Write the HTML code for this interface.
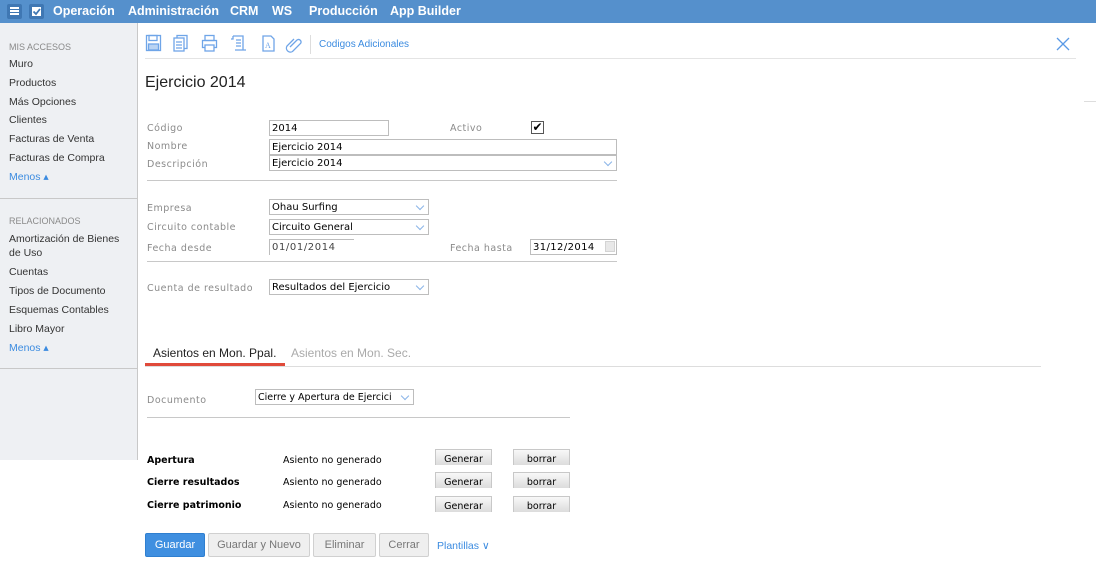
<!DOCTYPE html>
<html><head><meta charset="utf-8"><style>
*{margin:0;padding:0;box-sizing:border-box}
body{width:1096px;height:565px;position:relative;background:#fff;font-family:"Liberation Sans",sans-serif;overflow:hidden}
.a{position:absolute;white-space:nowrap}
#top{left:0;top:0;width:1096px;height:23px;background:#5590cc}
.mn{color:#fff;font-weight:bold;font-size:12.5px;top:4px}
#side{left:0;top:23px;width:138px;height:437px;background:#eef0f3;border-right:1px solid #c8c8c8}
.si{font-size:10.5px;color:#333;left:9px}
.sh{font-size:9px;color:#8a8a8a;left:9px}
.mo{font-size:10.5px;color:#3b8be0;left:9px}
.lb{font-family:"DejaVu Sans",sans-serif;font-size:9.5px;color:#8a8a8a;letter-spacing:.5px;left:147px}
.in{border:1px solid #bdbdbd;height:16px;font-family:"DejaVu Sans",sans-serif;font-size:10px;color:#000;padding:0 2px;line-height:15px;background:#fff}
.sel::after{content:"";position:absolute;right:5px;top:3px;width:5px;height:5px;border-right:1px solid #8ab4e8;border-bottom:1px solid #8ab4e8;transform:rotate(45deg)}
.hr{height:1px;background:#c8c8c8}
.b{font-family:"DejaVu Sans",sans-serif;font-size:9.5px;font-weight:bold;left:147px}
.t{font-family:"DejaVu Sans",sans-serif;font-size:9.5px;left:283px}
.gb{height:16px;width:57px;background:linear-gradient(#f8f8f8,#dcdcdc);border:1px solid #c8c8c8;border-bottom:none;font-family:"DejaVu Sans",sans-serif;font-size:9.5px;text-align:center;line-height:20px;overflow:hidden}
.bt{top:533px;height:24px;border:1px solid #d0d0d0;background:#efefef;color:#777;font-size:11px;text-align:center;line-height:22px;border-radius:2px}
</style></head><body>
<div class="a" id="top"></div>
<div class="a" style="left:7px;top:4px;width:15px;height:15px;background:#3f77b3;border-radius:2px"></div>
<div class="a" style="left:10px;top:7px;width:9px;height:2px;background:#fff;box-shadow:0 3px #fff,0 6px #fff"></div>
<div class="a" style="left:29px;top:4px;width:15px;height:15px;background:#3f77b3;border-radius:2px"></div>
<div class="a" style="left:32px;top:7px;width:9px;height:9px;background:#fff"></div>
<svg class="a" style="left:32px;top:7px" width="9" height="9"><path d="M1.5 4.5 L4 7 L8 2" stroke="#3f77b3" stroke-width="1.8" fill="none"/></svg>
<div class="a mn" style="left:53px">Operación</div>
<div class="a mn" style="left:128px">Administración</div>
<div class="a mn" style="left:230px">CRM</div>
<div class="a mn" style="left:272px">WS</div>
<div class="a mn" style="left:309px">Producción</div>
<div class="a mn" style="left:390px">App Builder</div>

<div class="a" id="side"></div>
<div class="a sh" style="top:42px">MIS ACCESOS</div>
<div class="a si" style="top:58px">Muro</div>
<div class="a si" style="top:77px">Productos</div>
<div class="a si" style="top:96px">Más Opciones</div>
<div class="a si" style="top:114px">Clientes</div>
<div class="a si" style="top:133px">Facturas de Venta</div>
<div class="a si" style="top:152px">Facturas de Compra</div>
<div class="a mo" style="top:171px">Menos ▴</div>
<div class="a hr" style="left:0;top:198px;width:137px"></div>
<div class="a sh" style="top:216px">RELACIONADOS</div>
<div class="a si" style="top:233px">Amortización de Bienes</div>
<div class="a si" style="top:247px">de Uso</div>
<div class="a si" style="top:266px">Cuentas</div>
<div class="a si" style="top:285px">Tipos de Documento</div>
<div class="a si" style="top:304px">Esquemas Contables</div>
<div class="a si" style="top:323px">Libro Mayor</div>
<div class="a mo" style="top:342px">Menos ▴</div>
<div class="a hr" style="left:0;top:368px;width:137px"></div>

<svg class="a" style="left:145px;top:34px" width="165" height="20" fill="none" stroke="#6fa5e8" stroke-width="1.3">
<rect x="1.5" y="1.5" width="14" height="15"/><rect x="4" y="1.5" width="8" height="5"/><rect x="3.5" y="10" width="10" height="6" fill="#b9d3f3"/>
<rect x="32" y="1.5" width="10" height="13"/><rect x="29" y="4" width="10" height="13" fill="#fff"/><path d="M31 8h6M31 11h6M31 14h6"/>
<rect x="60" y="1.5" width="9" height="5"/><rect x="57.5" y="6.5" width="14" height="7"/><rect x="60" y="11" width="9" height="6" fill="#fff"/>
<path d="M88 2h10v14h3M88 2v3h-2M91 6h5M91 9h5M91 12h5M98 16h-8"/>
<path d="M118 2h8l3 3v12h-11z"/><text x="120" y="14" font-size="8" fill="#6fa5e8" stroke="none" font-family="Liberation Serif">A</text>
<path d="M145 13l7-7a2.5 2.5 0 0 1 3.5 3.5l-8 8a4 4 0 0 1-5.5-5.5l7-7"/>
</svg>
<div class="a" style="left:310px;top:35px;width:1px;height:19px;background:#ddd"></div>
<div class="a" style="left:319px;top:39px;font-size:10px;color:#3b8be0">Codigos Adicionales</div>
<svg class="a" style="left:1056px;top:37px" width="14" height="14"><path d="M1 1L13 13M13 1L1 13" stroke="#5a9ae6" stroke-width="1.3"/></svg>
<div class="a hr" style="left:145px;top:58px;width:931px;background:#e4e4e4"></div>
<div class="a" style="left:145px;top:74px;font-size:16px;color:#222">Ejercicio 2014</div>
<div class="a hr" style="left:1084px;top:101px;width:12px;background:#ddd"></div>

<div class="a lb" style="top:123px">Código</div>
<div class="a in" style="left:269px;top:120px;width:120px">2014</div>
<div class="a lb" style="left:450px;top:123px">Activo</div>
<div class="a" style="left:531px;top:121px;width:13px;height:13px;border:1px solid #555;font-size:12px;line-height:11px;text-align:center">✔</div>
<div class="a lb" style="top:141px">Nombre</div>
<div class="a in" style="left:269px;top:139px;width:348px">Ejercicio 2014</div>
<div class="a lb" style="top:159px">Descripción</div>
<div class="a in sel" style="left:269px;top:155px;width:348px">Ejercicio 2014</div>
<div class="a hr" style="left:147px;top:180px;width:470px"></div>
<div class="a lb" style="top:203px">Empresa</div>
<div class="a in sel" style="left:269px;top:199px;width:160px">Ohau Surfing</div>
<div class="a lb" style="top:222px">Circuito contable</div>
<div class="a in sel" style="left:269px;top:219px;width:160px">Circuito General</div>
<div class="a lb" style="top:243px">Fecha desde</div>
<div class="a in" style="left:269px;top:239px;width:85px;border-right:none;border-bottom:none;color:#444;letter-spacing:.6px">01/01/2014</div>
<div class="a lb" style="left:450px;top:243px">Fecha hasta</div>
<div class="a in" style="left:530px;top:239px;width:87px;letter-spacing:.4px">31/12/2014</div>
<div class="a" style="left:605px;top:241px;width:10px;height:11px;background:#e8e8e8;border:1px solid #d4d4d4"></div>
<div class="a hr" style="left:147px;top:261px;width:470px"></div>
<div class="a lb" style="top:283px">Cuenta de resultado</div>
<div class="a in sel" style="left:269px;top:279px;width:160px">Resultados del Ejercicio</div>

<div class="a" style="left:153px;top:346px;font-size:12px;color:#222">Asientos en Mon. Ppal.</div>
<div class="a" style="left:291px;top:346px;font-size:12px;color:#aaa">Asientos en Mon. Sec.</div>
<div class="a hr" style="left:145px;top:366px;width:896px;background:#ddd"></div>
<div class="a" style="left:145px;top:363px;width:140px;height:3px;background:#e04a3a"></div>
<div class="a lb" style="top:395px">Documento</div>
<div class="a in sel" style="left:255px;top:389px;width:159px;font-family:'DejaVu Sans';font-size:9.5px">Cierre y Apertura de Ejercici</div>
<div class="a hr" style="left:147px;top:417px;width:423px"></div>

<div class="a b" style="top:455px">Apertura</div>
<div class="a t" style="top:455px">Asiento no generado</div>
<div class="a gb" style="left:435px;top:449px">Generar</div>
<div class="a gb" style="left:513px;top:449px">borrar</div>
<div class="a b" style="top:477px">Cierre resultados</div>
<div class="a t" style="top:477px">Asiento no generado</div>
<div class="a gb" style="left:435px;top:472px">Generar</div>
<div class="a gb" style="left:513px;top:472px">borrar</div>
<div class="a b" style="top:500px">Cierre patrimonio</div>
<div class="a t" style="top:500px">Asiento no generado</div>
<div class="a gb" style="left:435px;top:496px">Generar</div>
<div class="a gb" style="left:513px;top:496px">borrar</div>

<div class="a bt" style="left:145px;width:60px;background:#3f8fe0;border-color:#2f7fd0;color:#fff">Guardar</div>
<div class="a bt" style="left:208px;width:102px">Guardar y Nuevo</div>
<div class="a bt" style="left:313px;width:63px">Eliminar</div>
<div class="a bt" style="left:379px;width:50px">Cerrar</div>
<div class="a" style="left:437px;top:540px;font-size:10.5px;color:#3b8be0">Plantillas ∨</div>
</body></html>
